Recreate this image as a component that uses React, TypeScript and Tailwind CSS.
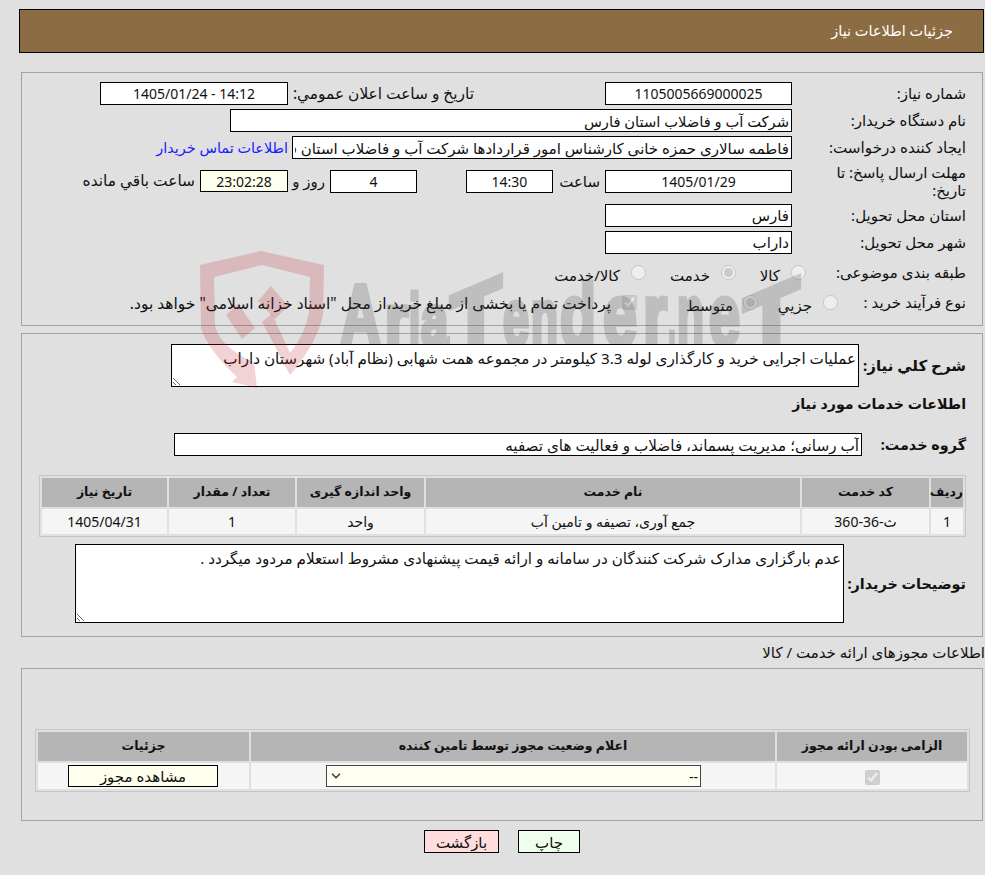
import { ChevronDown } from "lucide-react";

// letter, left, width, font size, advance of the letter in em
const marks: [string, number, number, number, number][] = [
  ["A", 340, 41, 88, 0.722],
  ["r", 385, 23, 72, 0.389],
  ["i", 409, 11, 72, 0.278],
  ["a", 421, 27, 72, 0.556],
  ["e", 503, 26, 80, 0.556],
  ["n", 531, 27, 80, 0.611],
  ["d", 560, 36, 88, 0.611],
  ["e", 603, 34, 88, 0.556],
  ["r", 643, 24, 88, 0.389],
  [".", 668, 8, 88, 0.278],
  ["n", 677, 27, 88, 0.611],
  ["e", 709, 31, 88, 0.556],
];

export default function App() {
  const fieldCls = "h-[23px] border border-black bg-white px-[2px] text-[#111] outline-none";
  const thCls = "h-[29px] bg-[#b5b5b5] p-0 text-center text-[12.5px] font-bold text-[#111]";
  const tdCls = "h-[25px] bg-[#f5f5f5] p-0 text-center text-[14px] text-[#111]";

  return (
    <div dir="rtl" className="relative min-h-[875px] overflow-hidden bg-[#e0e0e0] pt-[9px] font-['Noto_Sans','DejaVu_Sans',sans-serif] text-[15px] text-[#111]">
      {/* Header */}
      <div className="ml-[19px] mr-px flex h-[44px] items-center border border-black bg-[#8c6c42] pr-[30px] text-[14.5px] text-white">
        جزئیات اطلاعات نیاز
      </div>

      {/* Main details */}
      <div className="ml-[21px] mr-[2px] mt-[19px] border border-[#a3a3a3] pb-[14px] pr-[16px] pt-[9px]">
        <div className="flex h-[23px] items-center">
          <span className="w-[174px] shrink-0">شماره نیاز:</span>
          <input readOnly value="1105005669000025" className={`${fieldCls} w-[187px] text-center text-[14px]`} />
          <span className="mr-[131px] w-[181px] whitespace-nowrap text-[15.4px]">تاریخ و ساعت اعلان عمومي:</span>
          <input readOnly value="14:12 - 1405/01/24" className={`${fieldCls} mr-[5px] w-[188px] text-center text-[14px]`} />
        </div>
        <div className="mt-[4px] flex h-[23px] items-center">
          <span className="w-[174px] shrink-0">نام دستگاه خریدار:</span>
          <input readOnly value="شرکت آب و فاضلاب استان فارس" className={`${fieldCls} w-[562px] text-[14.7px]`} />
        </div>
        <div className="mt-[4px] flex h-[23px] items-center">
          <span className="w-[174px] shrink-0 text-[15.2px]">ایجاد کننده درخواست:</span>
          <input readOnly value="فاطمه سالاری حمزه خانی کارشناس امور قراردادها شرکت آب و فاضلاب استان فارس" className={`${fieldCls} w-[500px] text-[15px]`} />
          <a href="#" className="mr-[4px] whitespace-nowrap text-[14.4px] text-[#1a1aff]">اطلاعات تماس خریدار</a>
        </div>
        <div className="mt-[11px] flex h-[22px] items-center">
          <span className="w-[174px] shrink-0 leading-[18px]">مهلت ارسال پاسخ: تا<br />تاریخ:</span>
          <input readOnly value="1405/01/29" className={`${fieldCls} h-[22px] w-[187px] text-center text-[14px]`} />
          <span className="mr-[5px] w-[47px]">ساعت</span>
          <input readOnly value="14:30" className={`${fieldCls} h-[22px] w-[87px] text-center text-[14px]`} />
          <input readOnly value="4" className={`${fieldCls} mr-[49px] h-[22px] w-[87px] text-center text-[14px]`} />
          <span className="mr-[5px] w-[33px]">روز و</span>
          <input readOnly value="23:02:28" className="mr-[4px] h-[22px] w-[88px] border border-black bg-[#ffffee] px-[2px] text-center text-[14px] text-[#111] outline-none" />
          <span className="mr-[5px] whitespace-nowrap text-[15.4px]">ساعت باقي مانده</span>
        </div>
        <div className="mt-[12px] flex h-[22px] items-center">
          <span className="w-[174px] shrink-0">استان محل تحویل:</span>
          <input readOnly value="فارس" className={`${fieldCls} h-[22px] w-[187px] text-[15px]`} />
        </div>
        <div className="mt-[5px] flex h-[22px] items-center">
          <span className="w-[174px] shrink-0">شهر محل تحویل:</span>
          <input readOnly value="داراب" className={`${fieldCls} h-[22px] w-[187px] text-[15px]`} />
        </div>
        <div className="mt-[10px] flex h-[18px] items-center">
          <span className="w-[160px] shrink-0 whitespace-nowrap">طبقه بندی موضوعی:</span>
          <input type="radio" disabled className="m-0 h-[15px] w-[15px]" />
          <span className="mr-[11px] mt-[6px] w-[44px]">کالا</span>
          <input type="radio" disabled defaultChecked className="m-0 h-[15px] w-[15px]" />
          <span className="mr-[11px] mt-[6px] w-[64px]">خدمت</span>
          <input type="radio" disabled className="m-0 h-[15px] w-[15px]" />
          <span className="mr-[11px] mt-[6px]">کالا/خدمت</span>
        </div>
        <div className="mt-[12px] flex h-[18px] items-center">
          <span className="w-[128px] shrink-0">نوع فرآیند خرید :</span>
          <input type="radio" disabled className="m-0 h-[15px] w-[15px]" />
          <span className="mr-[11px] mt-[6px] w-[54px]">جزيي</span>
          <input type="radio" disabled defaultChecked className="m-0 h-[15px] w-[15px]" />
          <span className="mr-[10px] mt-[6px] w-[96px]">متوسط</span>
          <input type="checkbox" disabled defaultChecked className="m-0 h-[15px] w-[15px]" />
          <span className="mr-[11px] mt-[4px] whitespace-nowrap text-[15.5px]">پرداخت تمام یا بخشی از مبلغ خرید،از محل "اسناد خزانه اسلامی" خواهد بود.</span>
        </div>
      </div>

      {/* Need description + services */}
      <div className="ml-[21px] mr-[2px] mt-[7px] border border-[#a3a3a3] pb-[13px] pr-[16px] pt-[10px]">
        <div className="flex items-center">
          <span className="w-[107px] shrink-0 whitespace-nowrap font-bold">شرح کلي نیاز:</span>
          <textarea readOnly value="عملیات اجرایی خرید و کارگذاری لوله 3.3 کیلومتر در مجموعه همت شهابی (نظام آباد) شهرستان داراب" className="block h-[43px] w-[688px] border border-black bg-white px-[2px] pt-[2px] text-[15.2px] text-[#111] outline-none" />
        </div>
        <div className="mt-[7px] flex h-[20px] items-center text-[14.2px] font-bold">اطلاعات خدمات مورد نیاز</div>
        <div className="mt-[19px] flex items-center">
          <span className="w-[104px] shrink-0 text-[14.4px] font-bold">گروه خدمت:</span>
          <input readOnly value="آب رسانی؛ مدیریت پسماند، فاضلاب و فعالیت های تصفیه" className={`${fieldCls} h-[22px] w-[688px] text-[15.2px]`} />
        </div>
        <table className="mt-[19px] w-[927px] table-fixed border-separate border-spacing-[2px] border border-[#c6c6c6]">
          <thead>
            <tr>
              <th className={`${thCls} w-[32px]`}>ردیف</th>
              <th className={`${thCls} w-[127px]`}>کد خدمت</th>
              <th className={`${thCls} w-[374px]`}>نام خدمت</th>
              <th className={`${thCls} w-[127px]`}>واحد اندازه گیری</th>
              <th className={`${thCls} w-[126px]`}>تعداد / مقدار</th>
              <th className={thCls}>تاریخ نیاز</th>
            </tr>
          </thead>
          <tbody>
            <tr>
              <td className={tdCls}>1</td>
              <td className={tdCls}>ث-36-360</td>
              <td className={tdCls}>جمع آوری، تصیفه و تامین آب</td>
              <td className={tdCls}>واحد</td>
              <td className={tdCls}>1</td>
              <td className={tdCls}>1405/04/31</td>
            </tr>
          </tbody>
        </table>
        <div className="mt-[7px] flex items-center">
          <span className="w-[122px] shrink-0 whitespace-nowrap text-[14.4px] font-bold">توضیحات خریدار:</span>
          <textarea readOnly value="عدم بارگزاری مدارک شرکت کنندگان در سامانه و ارائه قیمت پیشنهادی مشروط استعلام مردود میگردد ." className="block h-[79px] w-[769px] border border-black bg-white px-[2px] pt-[2px] text-[15.2px] text-[#111] outline-none" />
        </div>
      </div>

      {/* Permits */}
      <div className="flex h-[31px] items-center whitespace-nowrap">اطلاعات مجوزهای ارائه خدمت / کالا</div>
      <div className="ml-[21px] mr-[2px] border border-[#a3a3a3] pb-[28px] pr-[12px] pt-[60px]">
        <table className="w-[935px] table-fixed border-separate border-spacing-[2px] border border-[#c6c6c6]">
          <thead>
            <tr>
              <th className={`${thCls} w-[190px]`}>الزامی بودن ارائه مجوز</th>
              <th className={`${thCls} w-[524px]`}>اعلام وضعیت مجوز توسط تامین کننده</th>
              <th className={thCls}>جزئیات</th>
            </tr>
          </thead>
          <tbody>
            <tr>
              <td className={`${tdCls} h-[26px]`}>
                <input type="checkbox" disabled defaultChecked className="m-0 h-[15px] w-[15px] align-middle" />
              </td>
              <td className={`${tdCls} h-[26px]`}>
                <div className="relative mr-[74px] h-[22px] w-[375px]">
                  <select className="block h-[22px] w-full appearance-none border border-[#444] bg-[#fffff2] px-[2px] text-[14px] text-[#111] outline-none">
                    <option>--</option>
                  </select>
                  <ChevronDown className="pointer-events-none absolute left-[3px] top-[4px] h-[14px] w-[14px] text-[#444]" strokeWidth={3} />
                </div>
              </td>
              <td className={`${tdCls} h-[26px]`}>
                <button className="mr-[31px] block h-[22px] w-[150px] border border-black bg-[#ffffee] text-[15px] leading-[20px] text-[#111]">مشاهده مجوز</button>
              </td>
            </tr>
          </tbody>
        </table>
      </div>

      {/* Actions */}
      <div className="mt-[9px] flex pr-[405px]">
        <button className="h-[23px] w-[62px] border border-black bg-[#eeffee] text-[15px] text-[#111]">چاپ</button>
        <button className="mr-[19px] h-[23px] w-[75px] border border-black bg-[#ffdddd] text-[15px] text-[#111]">بازگشت</button>
      </div>

      {/* Watermark */}
      <svg className="pointer-events-none absolute left-[190px] top-[245px]" width="620" height="143" viewBox="190 245 620 143" aria-hidden="true">
        <defs>
          <clipPath id="wm-clip">
            <rect x="190" y="245" width="620" height="99" />
          </clipPath>
        </defs>
        <g fill="rgba(190,30,40,0.2)">
          <path d="M261 251 L324 265 L323 315 Q316 345 290 375 L262 322 L272 314 L290 353 Q305 335 309 312 L310 277 L262 265 L214 277 L215 325 Q218 343 245 358 L254 363 L257 388 L232 382 L237 377 Q208 350 201 328 L200 265 Z" />
          <path d="M226 315 L238 304 L255 328 L242 339 Z" />
          <path d="M258 301 L271 286 L288 306 L275 319 Z" />
        </g>
        <g clipPath="url(#wm-clip)">
          <g opacity="0.2" fill="#3c3c3c" stroke="#3c3c3c" strokeWidth="5" fontFamily="'Liberation Sans', sans-serif" fontWeight="700" direction="ltr">
            {marks.map(([ch, x, w, size, adv], i) => (
              <text key={i} transform={`translate(${x} 345) scale(${w / (adv * size)} 1)`} fontSize={size}>{ch}</text>
            ))}
            <text transform="translate(450 366) skewY(-23) scale(0.85 1)" fontSize="100">T</text>
            <text transform="translate(743 369) skewY(-23) scale(0.93 1)" fontSize="100">T</text>
          </g>
        </g>
      </svg>
    </div>
  );
}
